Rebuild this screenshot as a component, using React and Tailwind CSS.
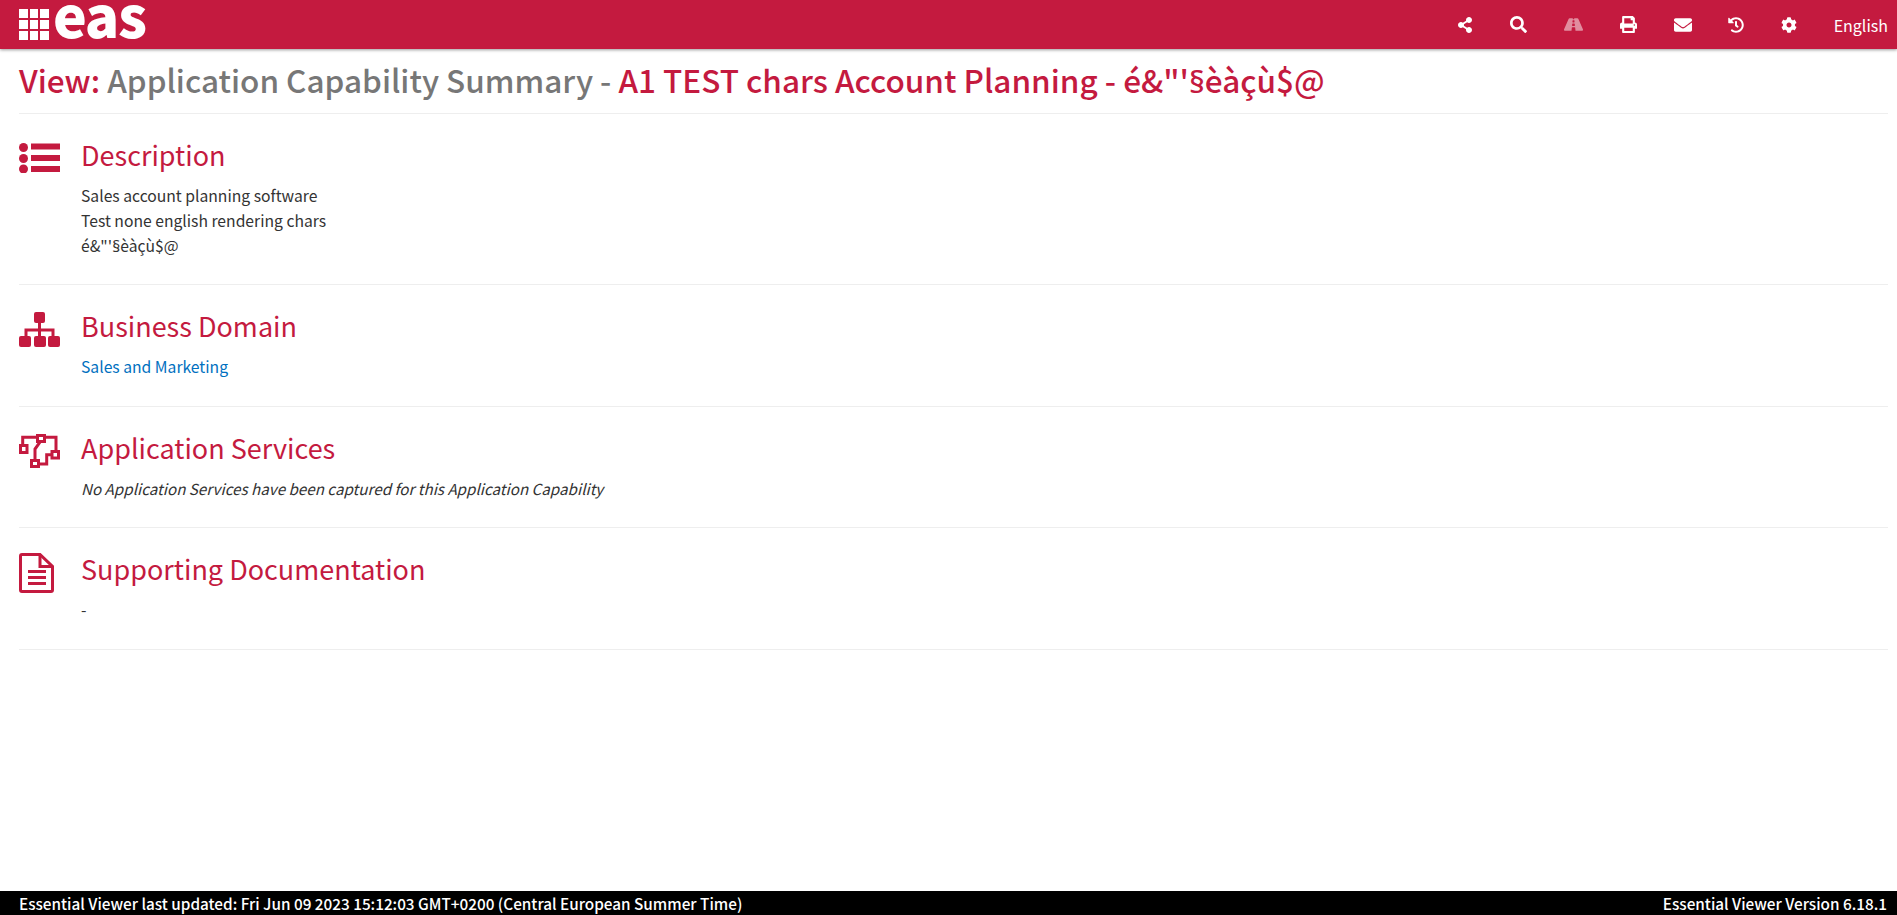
import React from "react";
import { FaShareAlt, FaSearch, FaRoad, FaPrint, FaEnvelope, FaHistory, FaCog } from "react-icons/fa";

const fontStack = { fontFamily: '"Noto Sans CJK JP", "Noto Sans", sans-serif' };
const red = "#c41a3f";

const ListIcon = () => (
  <svg viewBox="0 0 41 30" className="w-[41px] h-[30px]" fill={red}>
    <circle cx="4.5" cy="4.5" r="4.5" />
    <circle cx="4.5" cy="15.5" r="4.5" />
    <circle cx="4.5" cy="26" r="4.5" />
    <rect x="12" y="0.5" width="29" height="6" />
    <rect x="12" y="12" width="29" height="6" />
    <rect x="12" y="23" width="29" height="6" />
  </svg>
);

const SitemapIcon = () => (
  <svg viewBox="0 0 41 35" className="w-[41px] h-[35px]" fill={red}>
    <rect x="15" y="0" width="11" height="11" rx="2" />
    <rect x="0" y="24" width="12" height="11" rx="2" />
    <rect x="15" y="24" width="12" height="11" rx="2" />
    <rect x="29" y="24" width="12" height="11" rx="2" />
    <path d="M19 11h3v5.5H35.5V24h-3v-4.5H22V24h-3v-4.5H8.5V24h-3v-7.5H19z" />
  </svg>
);

const ServicesIcon = () => (
  <svg viewBox="0 0 41 34" className="w-[41px] h-[34px]" fill="none" stroke={red} strokeWidth="3">
    <path d="M3.7 11.7V3.3H37V18.3" />
    <path d="M22 6.7L16 15V26.7" />
    <path d="M18.7 30H27.7V20.7H33.7" />
    <rect x="1.5" y="11.5" width="6.5" height="7" fill="#fff" />
    <rect x="18.5" y="1.5" width="7" height="6" fill="#fff" />
    <rect x="33" y="17.5" width="6.5" height="6.5" fill="#fff" />
    <rect x="12.5" y="26.5" width="7" height="6" fill="#fff" />
  </svg>
);

const DocIcon = () => (
  <svg viewBox="0 0 35 40" className="w-[35px] h-[40px]" fill="none" stroke={red} strokeWidth="3">
    <path d="M21 1.5H3Q1.5 1.5 1.5 3V37Q1.5 38.5 3 38.5H32Q33.5 38.5 33.5 37V13.5Z" />
    <path d="M21 1.5V13.5H33.5" />
    <path d="M9 18.5H27M9 24.5H27M9 30.5H27" />
  </svg>
);

const Section = ({ icon, iconPad, title, children, bodyHeight }) => (
  <section className="flex border-b border-[#eeeeee]">
    <div className={`w-[62px] shrink-0 ${iconPad}`}>{icon}</div>
    <div className={bodyHeight}>
      <h2 className="pt-[26px] text-[27px] leading-[30px] text-[#c41a3f]">{title}</h2>
      <div className="mt-[13px] text-[15.7px] leading-[25px] text-[#333333]">{children}</div>
    </div>
  </section>
);

const navIcons = [
  { icon: <FaShareAlt size={16} />, w: "w-[54px]" },
  { icon: <FaSearch size={17} />, w: "w-[54px]" },
  { icon: <FaRoad size={19} className="opacity-50" />, w: "w-[56px]" },
  { icon: <FaPrint size={17} />, w: "w-[53px]" },
  { icon: <FaEnvelope size={18} />, w: "w-[56px]" },
  { icon: <FaHistory size={16} />, w: "w-[51px]" },
  { icon: <FaCog size={16} />, w: "w-[54px]" },
];

// § falls on a full-width glyph in the CJK face, so it takes the plain one
const Chars = () => (
  <>
    é&amp;"'<span style={{ fontFamily: '"Noto Sans", sans-serif' }}>§</span>èàçù$@
  </>
);

export default function App() {
  return (
    <div className="h-screen flex flex-col bg-white overflow-hidden" style={fontStack}>
      <header className="h-[49px] shrink-0 bg-[#c41a3f] flex items-center justify-between pl-[19px] pr-[9px] text-white shadow-[0_1px_3px_rgba(0,0,0,0.4)] relative">
        <div className="flex items-center h-full">
          <div className="grid grid-cols-3 gap-[2px] w-[30px]">
            {Array.from({ length: 9 }).map((_, i) => (
              <div key={i} className="h-[9px] bg-white" />
            ))}
          </div>
          <span className="ml-[4px] self-start text-[57px] leading-[26px] font-black tracking-[-1.4px]">eas</span>
        </div>
        <div className="flex items-center">
          {navIcons.map((n, i) => (
            <div key={i} className={`${n.w} flex justify-center`}>
              {n.icon}
            </div>
          ))}
          <span className="ml-[18px] text-[16px] leading-[24px]">English</span>
        </div>
      </header>

      <main className="flex-1 px-[19px] pr-[9px]">
        <h1 className="h-[65px] pt-[8px] text-[31.5px] leading-[44px] font-medium border-b border-[#eeeeee] text-[#c41a3f]">
          <span>View: </span>
          <span className="text-[#777777]">Application Capability Summary - </span>
          <span>
            A1 TEST chars Account Planning - <Chars />
          </span>
        </h1>

        <Section icon={<ListIcon />} iconPad="pt-[29px]" title="Description" bodyHeight="h-[170px]">
          <div>Sales account planning software</div>
          <div>Test none english rendering chars</div>
          <div>
            <Chars />
          </div>
        </Section>
        <Section icon={<SitemapIcon />} iconPad="pt-[27px]" title="Business Domain" bodyHeight="h-[121px]">
          <a className="text-[#0070c0]">Sales and Marketing</a>
        </Section>
        <Section icon={<ServicesIcon />} iconPad="pt-[27px]" title="Application Services" bodyHeight="h-[120px]">
          <em className="text-[15.2px]">No Application Services have been captured for this Application Capability</em>
        </Section>
        <Section icon={<DocIcon />} iconPad="pt-[25px]" title="Supporting Documentation" bodyHeight="h-[121px]">
          -
        </Section>
      </main>

      <footer className="h-[24px] shrink-0 bg-black text-white flex justify-between pl-[19px] pr-[10px] text-[15.3px] leading-[24px] font-medium">
        <span>Essential Viewer last updated: Fri Jun 09 2023 15:12:03 GMT+0200 (Central European Summer Time)</span>
        <span>Essential Viewer Version 6.18.1</span>
      </footer>
    </div>
  );
}
